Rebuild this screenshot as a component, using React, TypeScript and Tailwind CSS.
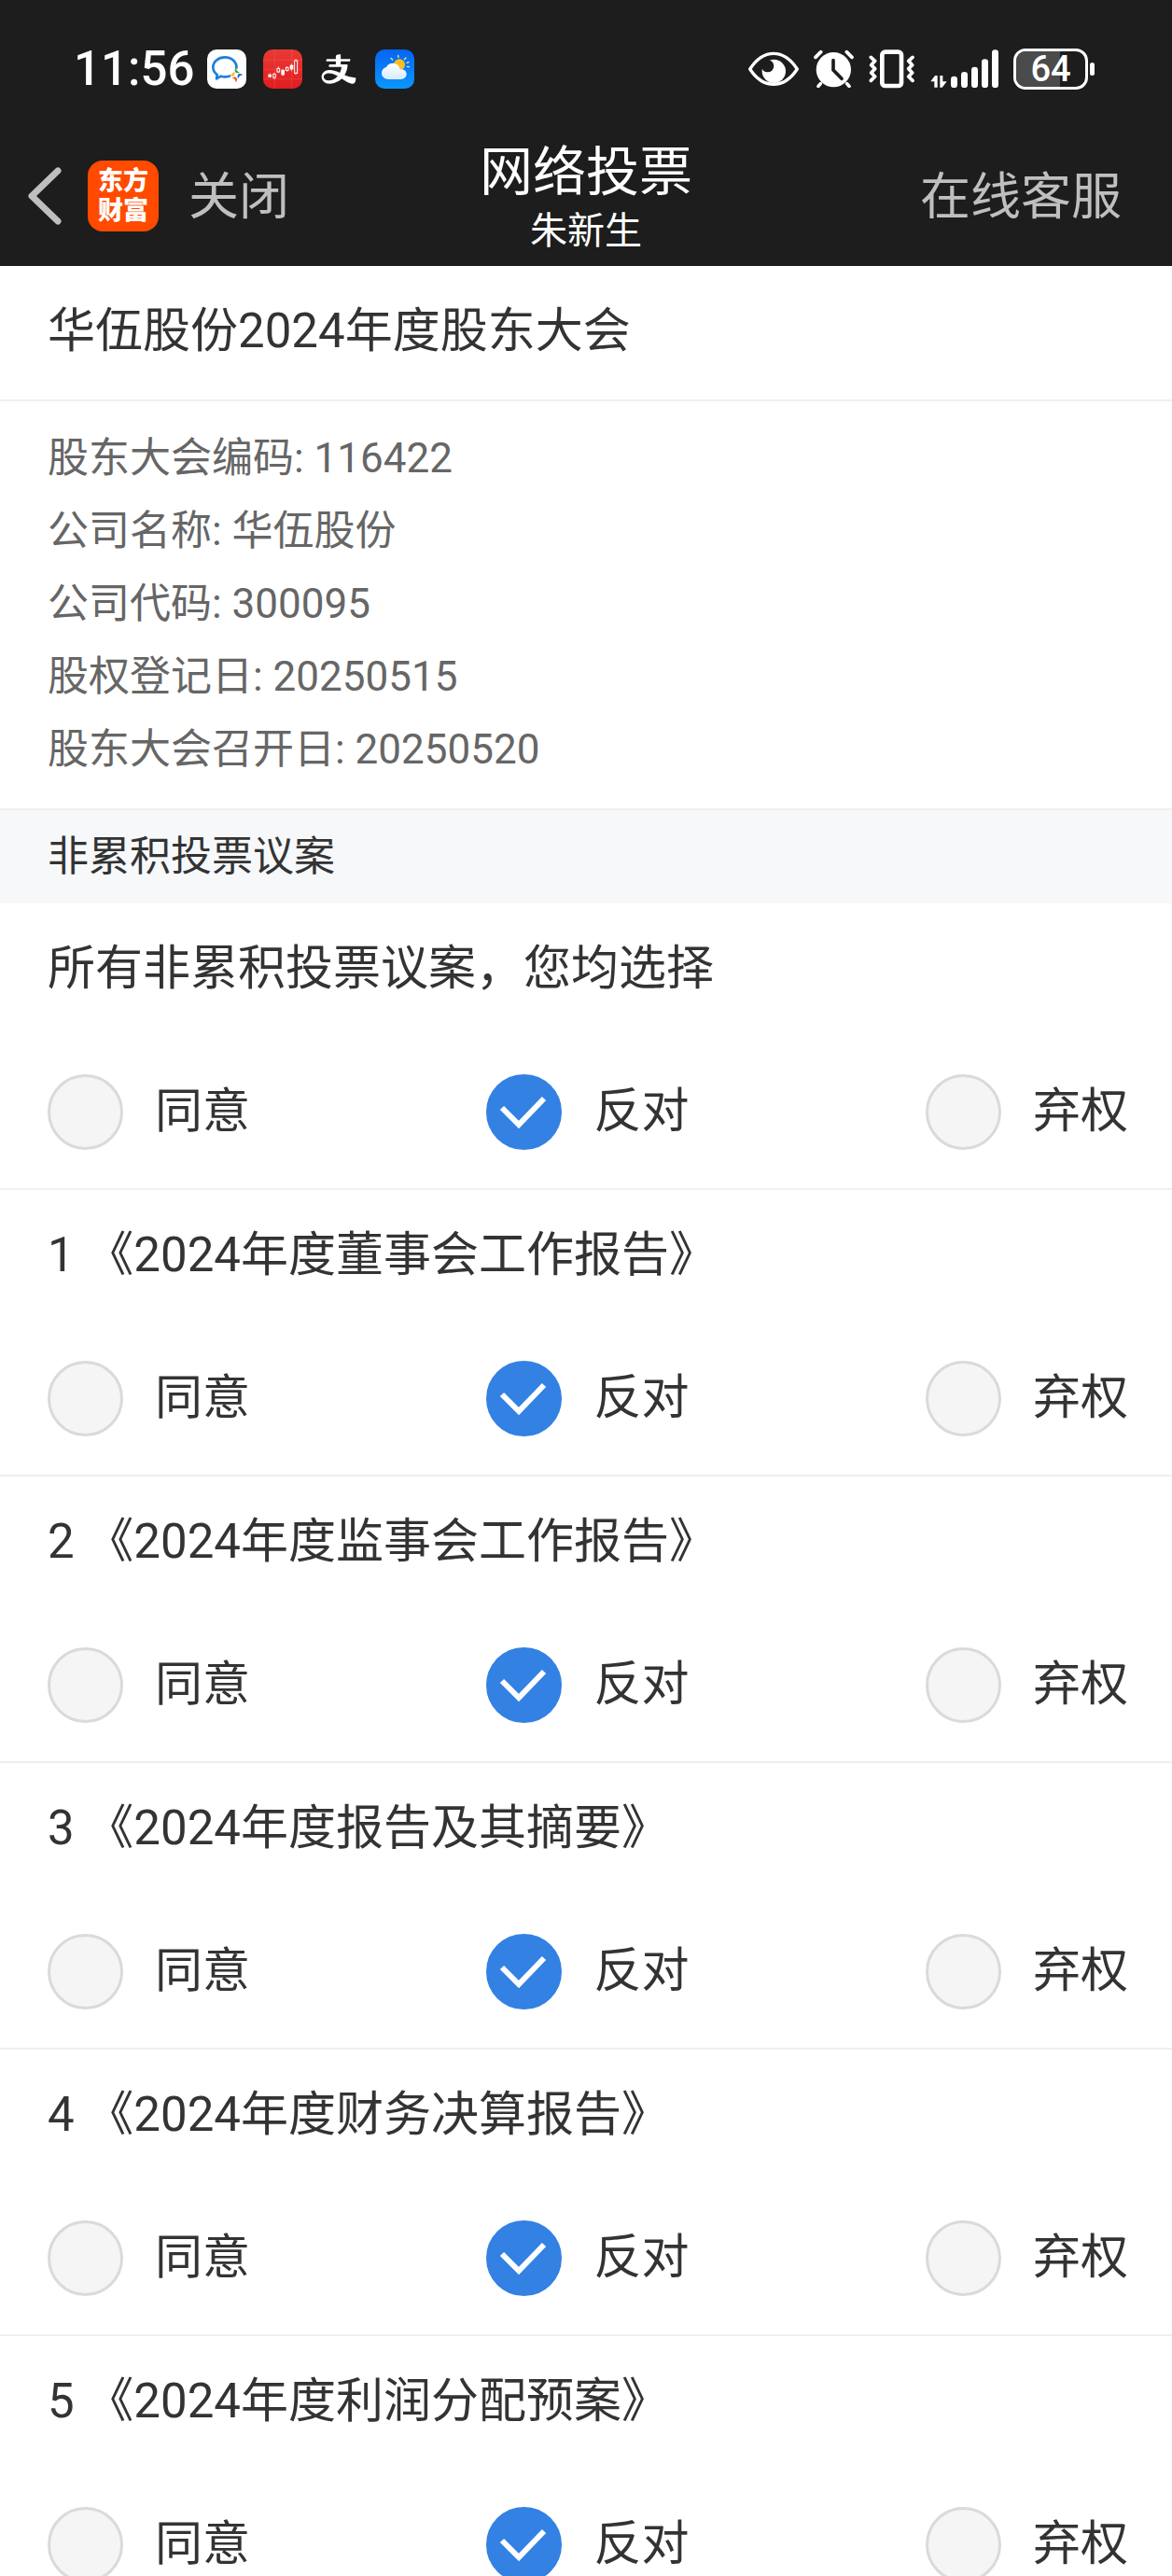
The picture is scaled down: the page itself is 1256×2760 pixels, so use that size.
import { useState } from 'react'
import { AiOutlineAlipay } from 'react-icons/ai'

type Choice = 'agree' | 'against' | 'abstain'

type Proposal = {
  id: string
  title: string
}

const CHOICES: { value: Choice; label: string }[] = [
  { value: 'agree', label: '同意' },
  { value: 'against', label: '反对' },
  { value: 'abstain', label: '弃权' },
]

const PROPOSALS: Proposal[] = [
  { id: '1', title: '《2024年度董事会工作报告》' },
  { id: '2', title: '《2024年度监事会工作报告》' },
  { id: '3', title: '《2024年度报告及其摘要》' },
  { id: '4', title: '《2024年度财务决算报告》' },
  { id: '5', title: '《2024年度利润分配预案》' },
]

const MEETING_INFO = [
  { label: '股东大会编码', value: '116422' },
  { label: '公司名称', value: '华伍股份' },
  { label: '公司代码', value: '300095' },
  { label: '股权登记日', value: '20250515' },
  { label: '股东大会召开日', value: '20250520' },
]

function WeComIcon() {
  return (
    <svg className="size-[42px]" viewBox="0 0 126 126" aria-hidden>
      <rect width="126" height="126" rx="30" fill="#fff" />
      <path
        d="M94 62c3-20-14-37-37-37C36 25 19 39 19 57c0 10 5 18 13 24l-2 13 14-8c10 3 20 3 31-1"
        fill="none"
        stroke="#1b7fdc"
        strokeWidth="8"
        strokeLinejoin="round"
      />
      <path d="M93 58c0 8 4 13 12 16-6 3-12 2-15-2-2-4-1-9 3-14z" fill="#2faa3c" />
      <path d="M115 82c-8 0-13 4-15 12-4-6-3-12 1-15 4-2 9-1 14 3z" fill="#1769d1" />
      <path d="M92 106c0-8-4-13-12-15 6-4 12-3 15 1 2 4 1 9-3 14z" fill="#e8541e" />
      <path d="M71 82c8 0 13-4 15-12 4 6 3 12-1 15-4 2-9 1-14-3z" fill="#f5b81c" />
    </svg>
  )
}

function StockIcon() {
  return (
    <svg className="size-[42px]" viewBox="0 0 126 126" aria-hidden>
      <defs>
        <linearGradient id="stock-bg" x1="0" y1="0" x2="0" y2="1">
          <stop offset="0" stopColor="#e93a34" />
          <stop offset="1" stopColor="#e21c1f" />
        </linearGradient>
      </defs>
      <rect width="126" height="126" rx="30" fill="url(#stock-bg)" />
      <path d="M37 0v126M92 0v126M0 34h126M0 64h126M0 95h126" stroke="#fff" strokeOpacity="0.15" strokeWidth="2" />
      <path d="M22 76v14M36 74v22M49 54v22M63 62v24M77 54v18M91 46v24M105 30v52" stroke="#fff" strokeWidth="2" />
      <g fill="#fff">
        <rect x="16" y="80" width="11" height="9" />
        <rect x="58" y="66" width="11" height="16" />
        <rect x="86" y="50" width="11" height="14" />
      </g>
      <g fill="#e42a28" stroke="#fff" strokeWidth="3">
        <rect x="32" y="79" width="8" height="11" />
        <rect x="45" y="61" width="8" height="11" />
        <rect x="73" y="58" width="8" height="9" />
        <rect x="101" y="36" width="9" height="40" />
      </g>
    </svg>
  )
}

function WeatherIcon() {
  return (
    <svg className="size-[42px]" viewBox="0 0 126 126" aria-hidden>
      <defs>
        <linearGradient id="sky" x1="0" y1="0" x2="0" y2="1">
          <stop offset="0" stopColor="#0664f2" />
          <stop offset="1" stopColor="#0b97fd" />
        </linearGradient>
        <linearGradient id="cloud" x1="0" y1="0" x2="0" y2="1">
          <stop offset="0" stopColor="#fff" />
          <stop offset="1" stopColor="#d8ebff" />
        </linearGradient>
      </defs>
      <rect width="126" height="126" rx="30" fill="url(#sky)" />
      <circle cx="78" cy="49" r="18" fill="#fdbf1f" />
      <path
        d="M56 33l-5-5M75 25l-1-6M94 32l5-5M102 43l6-2M103 55l6 1"
        stroke="#ffe08a"
        strokeWidth="4"
        strokeLinecap="round"
      />
      <path
        d="M44 96c-14 0-23-8-23-20 0-10 6-17 15-19 3-8 11-13 20-13 13 0 22 8 24 20 12-1 21 5 21 15s-8 17-19 17z"
        fill="url(#cloud)"
      />
    </svg>
  )
}

function EyeIcon() {
  return (
    <svg className="h-[38px] w-[54px]" viewBox="0 0 162 114" aria-hidden>
      <path
        d="M5 57C26 25 52 7 81 7s55 18 76 50c-21 32-47 49-76 49S26 89 5 57z"
        fill="none"
        stroke="#fff"
        strokeWidth="10"
        strokeLinejoin="round"
      />
      <circle cx="82" cy="64" r="38" fill="#fff" />
      <circle cx="62" cy="47" r="20" fill="#1d1d1d" />
    </svg>
  )
}

function AlarmIcon() {
  return (
    <svg className="h-[41px] w-[43px]" viewBox="0 0 129 123" aria-hidden>
      <circle cx="64" cy="65" r="56" fill="#fff" />
      <path
        d="M6 25L23 8M106 8l17 17M22 110l-7 8M107 110l7 8"
        stroke="#fff"
        strokeWidth="11"
        strokeLinecap="round"
      />
      <path d="M63 35v31l27 28" fill="none" stroke="#1d1d1d" strokeWidth="11" strokeLinecap="round" />
    </svg>
  )
}

function VibrateIcon() {
  return (
    <svg className="h-[42px] w-[50px]" viewBox="0 0 150 126" aria-hidden>
      <g fill="none" stroke="#fff" strokeLinejoin="round" strokeLinecap="round">
        <rect x="43" y="8" width="62" height="109" rx="10" strokeWidth="14" />
        <path
          d="M7 25l13 12L8 50l12 12L8 75l12 12L7 100M141 25l-13 12 12 13-12 12 12 13-12 12 13 13"
          strokeWidth="11"
        />
      </g>
    </svg>
  )
}

function SignalIcon() {
  return (
    <svg className="h-[41px] w-[73px]" viewBox="0 0 219 123" fill="#fff" aria-hidden>
      <path d="M15 84h8v38h-10v-19H1zM31 84h9v19h13L38 122h-7z" />
      <rect x="66" y="86" width="21" height="37" rx="10" />
      <rect x="99" y="72" width="21" height="51" rx="10" />
      <rect x="132" y="56" width="21" height="67" rx="10" />
      <rect x="165" y="31" width="21" height="92" rx="10" />
      <rect x="198" y="1" width="21" height="122" rx="10" />
    </svg>
  )
}

function Battery({ level }: { level: number }) {
  return (
    <div className="flex items-center gap-0.5">
      <div className="relative flex h-11 w-20 items-center justify-center overflow-hidden rounded-[13px] border-3 border-white">
        <div className="absolute inset-y-0 left-0 bg-[#4b4b4b]" style={{ width: `${level}%` }} />
        <span className="relative text-[38px] leading-none font-medium">{level}</span>
      </div>
      <div className="h-3.5 w-[5px] rounded-full bg-white" />
    </div>
  )
}

function StatusBar() {
  return (
    <div className="flex h-[147px] items-center justify-between pr-[83px] pl-[79px]">
      <div className="flex items-center gap-[18px]">
        <span className="-mr-1 text-[51px] leading-none font-medium">11:56</span>
        <WeComIcon />
        <StockIcon />
        <AiOutlineAlipay className="size-[42px]" aria-hidden />
        <WeatherIcon />
      </div>
      <div className="flex items-center gap-4">
        <EyeIcon />
        <AlarmIcon />
        <VibrateIcon />
        <SignalIcon />
        <Battery level={64} />
      </div>
    </div>
  )
}

function NavBar() {
  return (
    <nav className="grid grid-cols-[1fr_auto_1fr] items-center px-[30px] pb-3 text-[#bfbfbf]">
      <div className="flex items-center">
        <button type="button" aria-label="返回" className="mr-7">
          <svg className="h-[62px] w-9" viewBox="0 0 36 62" aria-hidden>
            <path
              d="M32 4L4 31l28 27"
              fill="none"
              stroke="currentColor"
              strokeWidth="7"
              strokeLinecap="round"
              strokeLinejoin="round"
            />
          </svg>
        </button>
        <span className="mr-8 flex size-[76px] flex-col items-center justify-center rounded-2xl bg-[#ff4a00] text-[27px] leading-8 font-black text-white">
          <span>东方</span>
          <span>财富</span>
        </span>
        <button type="button" className="pt-1 text-[54px] leading-[76px]">
          关闭
        </button>
      </div>
      <div className="text-center text-white">
        <h1 className="text-[57px] leading-[76px]">网络投票</h1>
        <p className="text-[40px] leading-[50px]">朱新生</p>
      </div>
      <button type="button" className="mr-6 justify-self-end pt-1 text-[54px] leading-[76px]">
        在线客服
      </button>
    </nav>
  )
}

type VoteGroupProps = {
  name: string
  title: string
  value: Choice | null
  onChange: (choice: Choice) => void
}

function VoteGroup({ name, title, value, onChange }: VoteGroupProps) {
  return (
    <section className="border-b-2 border-[#efefef] pt-[34px] pr-[47px] pb-[41px] pl-[51px]">
      <h3 id={`${name}-title`} className="mb-[77px] text-[51px] leading-[72px]">
        {title}
      </h3>
      <div role="radiogroup" aria-labelledby={`${name}-title`} className="flex justify-between">
        {CHOICES.map((choice) => (
          <label key={choice.value} className="flex cursor-pointer items-center gap-[34px]">
            <span className="relative size-[81px]">
              <input
                type="radio"
                name={name}
                value={choice.value}
                checked={value === choice.value}
                onChange={() => onChange(choice.value)}
                className="peer block size-full cursor-pointer appearance-none rounded-full border-3 border-[#dadada] bg-[#f5f5f5] checked:border-[#3381e3] checked:bg-[#3381e3]"
              />
              <svg
                className="pointer-events-none absolute inset-0 hidden size-full peer-checked:block"
                viewBox="0 0 81 81"
                aria-hidden
              >
                <path d="M17 36l18 18 27-28" fill="none" stroke="#fff" strokeWidth="6" />
              </svg>
            </span>
            <span className="pb-0.5 text-[51px] leading-[72px]">{choice.label}</span>
          </label>
        ))}
      </div>
    </section>
  )
}

export default function App() {
  const [allChoice, setAllChoice] = useState<Choice | null>('against')
  const [votes, setVotes] = useState<Record<string, Choice>>(() =>
    Object.fromEntries(PROPOSALS.map((p) => [p.id, 'against' as Choice])),
  )

  function handleAll(choice: Choice) {
    setAllChoice(choice)
    setVotes(Object.fromEntries(PROPOSALS.map((p) => [p.id, choice])))
  }

  function handleVote(id: string, choice: Choice) {
    const next = { ...votes, [id]: choice }
    setVotes(next)
    setAllChoice(PROPOSALS.every((p) => next[p.id] === choice) ? choice : null)
  }

  return (
    <div
      lang="zh-CN"
      className="h-screen overflow-hidden bg-white font-['Roboto','Noto_Sans_CJK_SC',sans-serif] text-[#333]"
    >
      <header className="bg-[#1d1d1d] text-white">
        <StatusBar />
        <NavBar />
      </header>

      <main>
        <h2 className="border-b-2 border-[#efefef] px-[51px] pt-[34px] pb-[37px] text-[51px] leading-[72px]">
          华伍股份2024年度股东大会
        </h2>

        <div className="border-b-2 border-[#efefef] px-[51px] pt-[22px] pb-6 text-[44px] leading-[78px] text-[#666]">
          {MEETING_INFO.map((item) => (
            <p key={item.label}>
              {item.label}: {item.value}
            </p>
          ))}
        </div>

        <h2 className="bg-[#f6f8fa] px-[51px] pt-3.5 pb-[14px] text-[44px] leading-[72px]">非累积投票议案</h2>

        <VoteGroup name="all" title="所有非累积投票议案，您均选择" value={allChoice} onChange={handleAll} />
        {PROPOSALS.map((p) => (
          <VoteGroup
            key={p.id}
            name={`proposal-${p.id}`}
            title={`${p.id} ${p.title}`}
            value={votes[p.id]}
            onChange={(choice) => handleVote(p.id, choice)}
          />
        ))}
      </main>
    </div>
  )
}
